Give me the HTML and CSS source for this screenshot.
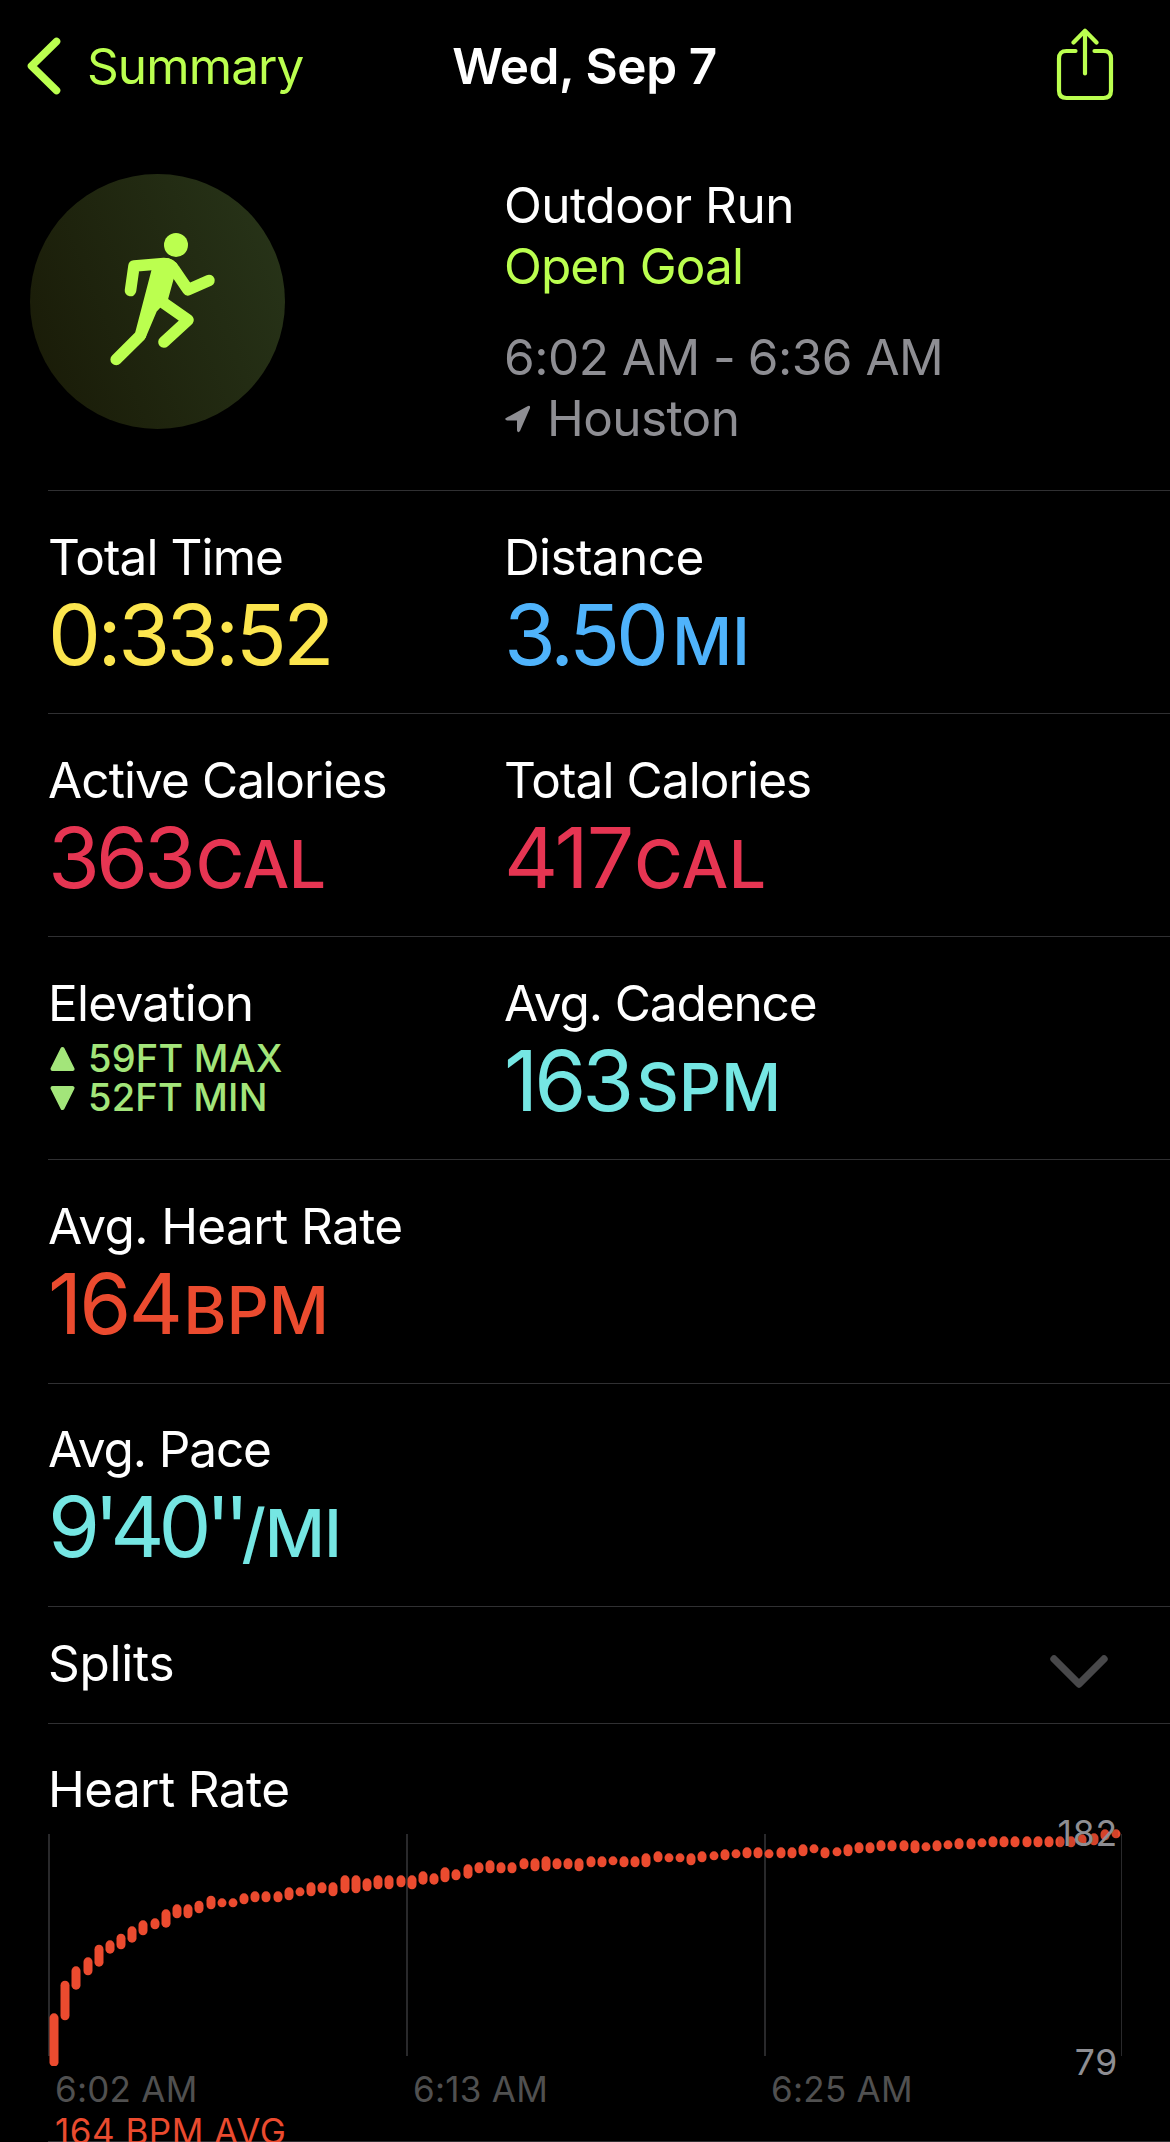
FILE: index.html
```html
<!DOCTYPE html>
<html lang="en">
<head>
<meta charset="utf-8">
<title>Wed, Sep 7</title>
<link rel="stylesheet" href="styles.css">
</head>
<body>
<div class="screen">
  <header class="nav">
    <a class="back">
      <svg class="back-icon" width="34" height="58" viewBox="0 0 34 58"><path d="M29.5 4.5 4.5 29l25 24.5"/></svg>
      <span class="back-text">Summary</span>
    </a>
    <h1 class="title">Wed, Sep 7</h1>
    <svg class="share" width="58" height="74" viewBox="0 0 58 74"><path d="M19.500 23H10.500Q3 23 3 30.500V62.500Q3 70 10.500 70H47.500Q55 70 55 62.500V30.500Q55 23 47.500 23H38.500M29 45.500V3.500M17.500 14.500 29 2.800 40.500 14.500"/></svg>
  </header>

  <section class="workout">
    <div class="badge">
      <svg width="255" height="255" viewBox="0 0 255 255">
        <defs><linearGradient id="disc" x1="0" y1=".7" x2="1" y2=".3"><stop offset="0" stop-color="#1a1c08"/><stop offset="1" stop-color="#273318"/></linearGradient></defs>
        <circle cx="127.500" cy="127.500" r="127.500" fill="url(#disc)"/>
        <g class="runner">
          <circle cx="146" cy="71" r="12"/>
          <path class="limb" d="M100.500 116.500 104 92 134 89.500Q141 89.500 144.500 96L158 115.800 179 106.500"/>
          <path d="M121.500 96 134 84Q144 84 148 92L143.500 105.500 138 125.500 126.700 137.500 115.500 164 105.200 158.500Z"/>
          <path class="limb" d="M133 128.500 158 146 134 168M110.500 161.300 86.200 185.500"/>
        </g>
      </svg>
    </div>
    <div class="details">
      <p class="kind">Outdoor Run</p>
      <p class="goal">Open Goal</p>
      <p class="hours">6:02 AM <span class="dash">-</span> 6:36 AM</p>
      <p class="place"><svg width="26" height="28" viewBox="0 0 26 28"><path d="M1 13 22.500 1.200Q25.500 0 25 3L15 26Q13 28.500 12 25.500V15.500H2Q-1 14.500 1 13Z"/></svg><span>Houston</span></p>
    </div>
  </section>

  <section class="row">
    <div class="metric"><h2 class="tight">Total Time</h2><p class="value yellow time">0:33:52</p></div>
    <div class="metric"><h2>Distance</h2><p class="value blue">3.50<small>MI</small></p></div>
  </section>
  <section class="row">
    <div class="metric"><h2 class="tight">Active Calories</h2><p class="value pink">363<small>CAL</small></p></div>
    <div class="metric"><h2 class="tight">Total Calories</h2><p class="value pink wide">417<small>CAL</small></p></div>
  </section>
  <section class="row">
    <div class="metric"><h2 class="elevation">Elevation</h2>
      <div class="elevs">
        <p class="elev"><svg width="25" height="26" viewBox="0 0 25 26"><path d="M12.500 3 22.500 23H2.500Z"/></svg><span>59FT MAX</span></p>
        <p class="elev"><svg width="25" height="26" viewBox="0 0 25 26"><path d="M12.500 23 22.500 3H2.500Z"/></svg><span>52FT MIN</span></p>
      </div>
    </div>
    <div class="metric"><h2 class="tighter">Avg. Cadence</h2><p class="value teal cadence">163<small>SPM</small></p></div>
  </section>
  <section class="row tall">
    <div class="metric"><h2>Avg. Heart Rate</h2><p class="value red beats">164<small>BPM</small></p></div>
  </section>
  <section class="row raised">
    <div class="metric"><h2 class="tighter">Avg. Pace</h2><p class="value teal pace">9<i>'</i>40<i class="first">'</i><i>'</i><small>/MI</small></p></div>
  </section>
  <section class="row splits">
    <h2 class="loose">Splits</h2>
    <svg width="58" height="36" viewBox="0 0 58 36"><path d="M4 4 29 29 54 4"/></svg>
  </section>
  <section class="row heart">
    <h2>Heart Rate</h2>
    <div class="chart">
      <svg class="plot" id="plot" width="1122" height="240" viewBox="48 1826 1122 240">
        <path class="grid" d="M49 1834V2056M407 1834V2056M765 1834V2056"/>
        <path class="grid edge" d="M1121.500 1834V2056"/>
      </svg>
      <span class="high">182</span>
      <span class="low">79</span>
    </div>
    <div class="axis"><span>6:02 AM</span><span>6:13 AM</span><span>6:25 AM</span></div>
    <p class="average">164 BPM AVG</p>
  </section>
</div>
<script src="chart.js"></script>
</body>
</html>
```
FILE: styles.css
```css
* { box-sizing: border-box; margin: 0; padding: 0; }
body { background: #000; color: #fff; font-family: Inter, "Liberation Sans", sans-serif; font-size: 49.5px; font-weight: 400; }
svg { display: block; flex: none; }
.screen { width: 1170px; height: 2142px; overflow: hidden; background: #000; }

.nav { height: 132px; display: grid; grid-template-columns: 1fr auto 1fr; align-items: start; padding: 0 28px 0 27px; }
.back { display: flex; color: #bbff4f; }
.back-icon { margin-top: 37px; fill: none; stroke: #bbff4f; stroke-width: 7.6; stroke-linecap: round; stroke-linejoin: round; }
.back-text { margin: 36px 0 0 26px; line-height: 60px; letter-spacing: -.9px; }
.title { margin-top: 36px; font-size: 49.5px; font-weight: 600; line-height: 60px; letter-spacing: -.4px; }
.share { justify-self: end; margin: 28px 28px 0 0; fill: none; stroke: #bbff4f; stroke-width: 4.2; stroke-linecap: round; stroke-linejoin: round; }

.workout { height: 358px; display: flex; padding: 42px 0 0 30px; }
.badge { width: 474px; }
.runner { fill: #bbff4f; }
.limb { fill: none; stroke: #bbff4f; stroke-width: 11.6; stroke-linecap: round; stroke-linejoin: round; }
.details { padding-top: 1px; }
.details p { line-height: 61px; white-space: nowrap; letter-spacing: -.5px; }
.details .goal { color: #bbff4f; letter-spacing: -.9px; }
.details .hours { margin-top: 30px; color: #8e8e93; letter-spacing: -.5px; }
.dash { margin: 0 -1px 0 0; }
.details .place { display: flex; align-items: center; gap: 16px; color: #8e8e93; fill: #8e8e93; letter-spacing: -.6px; }
.place svg { margin-left: 1px; }

.row { height: 223px; margin-left: 48px; border-top: 1px solid #303032; display: grid; grid-template-columns: 456px 1fr; padding-top: 36px; }
.row.tall { height: 224px; }
.row.raised { padding-top: 35px; }
h2 { font-size: 49.5px; font-weight: 400; line-height: 61px; letter-spacing: -.6px; white-space: nowrap; }
.tight { letter-spacing: -.9px; }
.tighter { letter-spacing: -1.1px; }
.elevation { letter-spacing: -.75px; }
.loose { letter-spacing: -.25px; }
.value { font-size: 84px; line-height: 88px; font-weight: 400; letter-spacing: -4px; margin-top: 3px; white-space: nowrap; }
.value small { font-size: 66px; letter-spacing: -.4px; margin-left: 4px; font-weight: 500; }
.time { letter-spacing: -3.5px; }
.wide { letter-spacing: -2px; }
.wide small { margin-left: 2px; letter-spacing: .3px; }
.beats { letter-spacing: -2.800px; }
.beats small { margin-left: 3px; letter-spacing: 0; }
.blue small { margin-left: 7px; }
.cadence small { margin-left: 6px; letter-spacing: 0; }
.pace { letter-spacing: -6px; }
.pace i { font-style: normal; letter-spacing: -9px; }
.pace .first { letter-spacing: -6.5px; }
.pace small { margin-left: 1px; letter-spacing: -1px; }
.yellow { color: #fbe54e; }
.blue { color: #4fb3fb; }
.pink { color: #e63552; }
.teal { color: #75e6e3; }
.red { color: #eb4b2f; }
.elevs { padding-top: 5px; }
.elev { display: flex; align-items: center; gap: 13px; margin-left: 2px; font-size: 38px; font-weight: 500; line-height: 39px; letter-spacing: .2px; color: #a3e57a; white-space: nowrap; }
.elev svg { fill: #a3e57a; stroke: #a3e57a; stroke-width: 4; stroke-linejoin: round; }

.row.splits { height: 117px; display: flex; justify-content: space-between; align-items: flex-start; padding: 26px 62px 0 0; }
.splits svg { margin-top: 22px; fill: none; stroke: #48484a; stroke-width: 7.4; stroke-linecap: round; stroke-linejoin: round; }
.row.heart { height: 419px; display: block; padding-top: 35px; border-bottom: 1px solid #303032; }
.chart { position: relative; height: 240px; margin-top: 6px; }
.grid { stroke: #29292b; stroke-width: 2; }
.edge { stroke-width: 1; }
.bar { fill: #eb4b2f; }
.high, .low { position: absolute; right: 52px; font-size: 35.5px; line-height: 40px; letter-spacing: .8px; color: #8e8e93; }
.high { top: -12px; background: rgba(0, 0, 0, .1); }
.low { top: 217px; }
.axis { display: grid; grid-template-columns: 358px 358px 1fr; padding: 3px 0 0 7px; font-size: 35px; line-height: 40px; letter-spacing: .25px; color: #505050; }
.average { padding-left: 7px; font-size: 35px; line-height: 44px; letter-spacing: .5px; color: #eb4b2f; }
```
FILE: chart.js
```js
// Top and bottom of each heart rate range, in thirds of a pixel below y = 1800.
const ranges = [
  [640,800],[542,661],[499,569],[472,526],[434,500],[421,461],[401,448],[379,428],
  [361,406],[355,388],[328,383],[313,355],[313,355],[302,340],[287,328],[295,322],
  [295,322],[280,313],[274,307],[274,307],[274,307],[262,301],[262,289],[247,289],
  [247,280],[247,289],[226,280],[226,280],[235,274],[226,268],[226,268],[226,262],
  [226,268],[214,254],[220,254],[202,247],[208,241],[193,236],[187,220],[181,220],
  [187,220],[187,220],[175,208],[175,214],[169,214],[175,208],[175,208],[175,214],
  [169,202],[169,202],[169,196],[169,202],[169,202],[160,202],[154,187],[160,187],
  [160,187],[160,196],[154,187],[154,181],[148,181],[148,175],[142,175],[142,175],
  [148,175],[142,175],[142,175],[133,169],[133,160],[142,175],[142,169],[133,169],
  [127,160],[127,160],[121,154],[121,154],[121,154],[121,160],[127,154],[121,154],
  [121,148],[115,148],[115,148],[115,142],[109,142],[109,142],[109,142],[109,142],
  [109,142],[109,142],[109,142],[109,142],[103,136],[100,136],[88,121],[88,115]
];
const plot = document.getElementById('plot');
ranges.forEach(([top, bottom], i) => {
  const bar = document.createElementNS('http://www.w3.org/2000/svg', 'rect');
  bar.setAttribute('class', 'bar');
  bar.setAttribute('x', Math.round(54 + i * 11.179) - 4.5);
  bar.setAttribute('y', 1800 + top / 3);
  bar.setAttribute('width', 9);
  bar.setAttribute('height', (bottom - top) / 3);
  bar.setAttribute('rx', 4.5);
  plot.appendChild(bar);
});
```
